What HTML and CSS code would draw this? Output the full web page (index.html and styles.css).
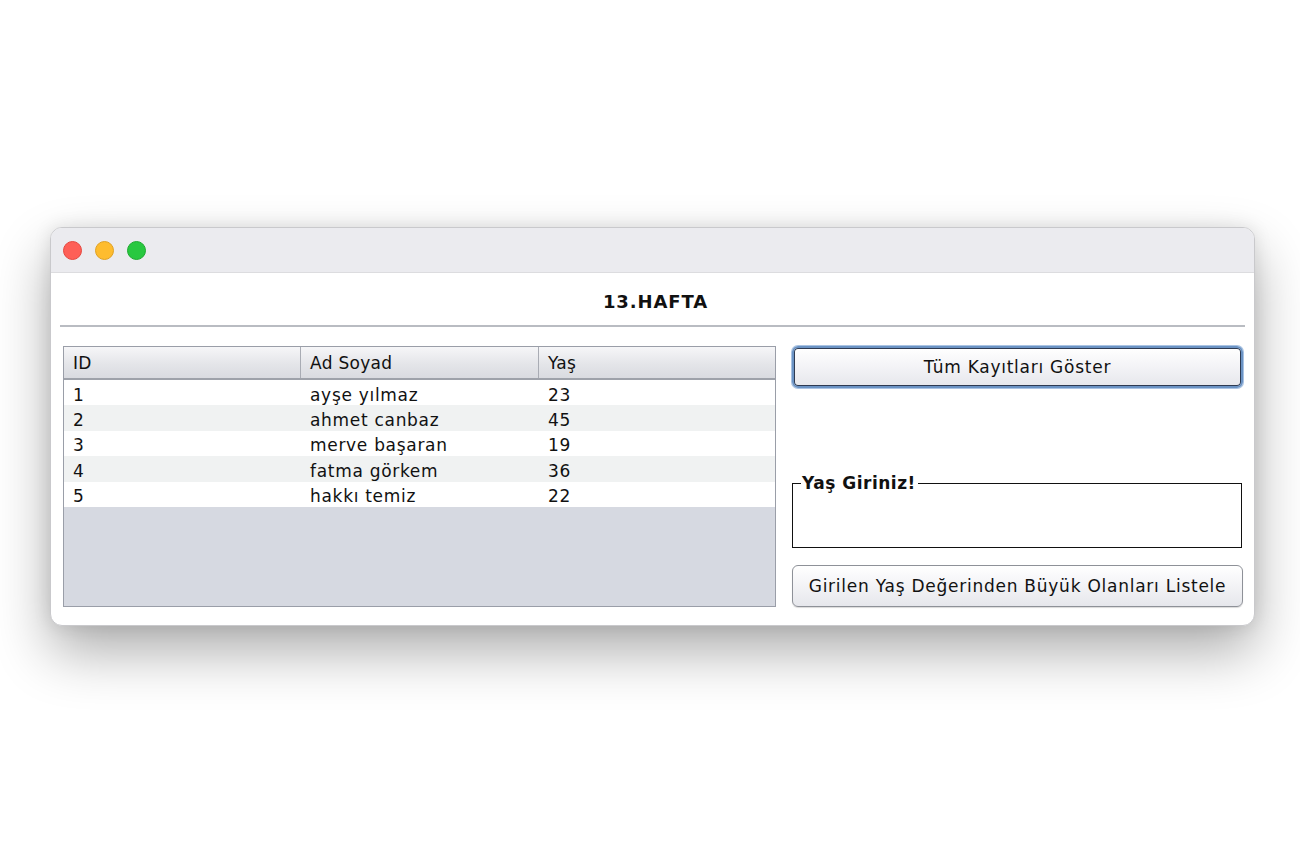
FILE: index.html
```html
<!DOCTYPE html>
<html lang="tr">
<head>
<meta charset="utf-8">
<link rel="stylesheet" href="styles.css">
</head>
<body>
<div class="window">
  <div class="titlebar">
    <span class="light red"></span>
    <span class="light yellow"></span>
    <span class="light green"></span>
  </div>
  <div class="content">
    <div class="heading">13.HAFTA</div>
    <div class="sep"></div>
    <div class="main">
      <div class="table">
        <div class="thead">
          <div class="th">ID</div>
          <div class="th">Ad Soyad</div>
          <div class="th">Yaş</div>
        </div>
        <div class="tbody">
          <div class="tr"><div class="td">1</div><div class="td">ayşe yılmaz</div><div class="td">23</div></div>
          <div class="tr alt"><div class="td">2</div><div class="td">ahmet canbaz</div><div class="td">45</div></div>
          <div class="tr"><div class="td">3</div><div class="td">merve başaran</div><div class="td">19</div></div>
          <div class="tr alt"><div class="td">4</div><div class="td">fatma görkem</div><div class="td">36</div></div>
          <div class="tr"><div class="td">5</div><div class="td">hakkı temiz</div><div class="td">22</div></div>
        </div>
      </div>
      <div class="side">
        <button class="btn focus">Tüm Kayıtları Göster</button>
        <div class="box">
          <span class="legend">Yaş Giriniz!</span>
        </div>
        <button class="btn">Girilen Yaş Değerinden Büyük Olanları Listele</button>
      </div>
    </div>
  </div>
</div>
</body>
</html>
```
FILE: styles.css
```css
html, body {
  margin: 0;
  padding: 0;
  background: #ffffff;
  font-family: "DejaVu Sans", "Liberation Sans", sans-serif;
}
body {
  padding-top: 227px;
  padding-left: 50px;
  min-height: 850px;
  box-sizing: border-box;
}
.window {
  width: 1205px;
  height: 399px;
  box-sizing: border-box;
  border-radius: 12px;
  background: #ffffff;
  border: 1px solid #c9c9cc;
  box-shadow: 0 26px 55px rgba(0,0,0,0.32), 0 0 18px rgba(0,0,0,0.10);
  overflow: hidden;
  display: flex;
  flex-direction: column;
}
.titlebar {
  height: 44px;
  background: #ebebef;
  border-bottom: 1px solid #dcdcdf;
  display: flex;
  align-items: center;
  padding-left: 12px;
  gap: 13px;
  flex: none;
}
.light {
  width: 19px;
  height: 19px;
  border-radius: 50%;
  box-sizing: border-box;
}
.red { background: #fe5f57; border: 1px solid #e5473f; }
.yellow { background: #febc2e; border: 1px solid #e0a123; }
.green { background: #28c840; border: 1px solid #1eaa30; }
.content {
  flex: 1;
  display: flex;
  flex-direction: column;
}
.heading {
  height: 52px;
  display: flex;
  align-items: center;
  justify-content: center;
  font-weight: bold;
  font-size: 18px;
  letter-spacing: 0.9px;
  color: #111;
  padding-top: 4px;
  box-sizing: border-box;
  padding-left: 6px;
}
.sep {
  height: 2px;
  margin: 0 9px 0 9px;
  background: #b9bcc2;
}
.main {
  flex: 1;
  display: flex;
  padding: 19px 11px 18px 12px;
  gap: 16px;
}
.table {
  width: 713px;
  box-sizing: border-box;
  border: 1px solid #9a9ea8;
  background: #d6d9e1;
  display: flex;
  flex-direction: column;
  font-size: 17px;
  letter-spacing: 0.7px;
  color: #111;
}
.thead {
  display: grid;
  grid-template-columns: 237px 238px 1fr;
  height: 33px;
  box-sizing: border-box;
  background: linear-gradient(#f6f6f8, #e4e5e9 55%, #d9dbe0);
  border-bottom: 2px solid #9ea2aa;
}
.th {
  padding-left: 9px;
  display: flex;
  align-items: center;
  border-right: 1px solid #a9acb4;
  letter-spacing: 0.3px;
}
.th:last-child { border-right: 0; }
.tr {
  display: grid;
  grid-template-columns: 237px 238px 1fr;
  height: 25.4px;
  background: #ffffff;
}
.tr.alt { background: #f0f2f2; }
.td {
  padding-left: 9px;
  display: flex;
  align-items: center;
  padding-top: 4px;
}
.side {
  flex: 1;
  display: flex;
  flex-direction: column;
}
.btn {
  font-family: inherit;
  font-size: 17px;
  letter-spacing: 0.75px;
  color: #111;
  height: 42px;
  border-radius: 6px;
  border: 1px solid #8e9198;
  background: linear-gradient(#ffffff, #f3f3f6 50%, #e6e7ec);
  box-shadow: 0 1px 1px rgba(0,0,0,0.15);
  padding: 0;
  margin: 0;
}
.btn.focus {
  border: 2px solid #6b93c4;
  box-shadow: 0 0 0 1px #a9c3e3, inset 0 0 0 1px #2e3b52;
}
.box {
  position: relative;
  margin: 95px 1px 17px 0;
  height: 65px;
  box-sizing: border-box;
  border: 1.5px solid #111;
}
.legend {
  position: absolute;
  left: 8px;
  top: -10px;
  background: #ffffff;
  font-weight: bold;
  font-size: 17px;
  letter-spacing: 0.5px;
  line-height: 18px;
  color: #111;
  padding: 0 2px 0 1px;
}
```
